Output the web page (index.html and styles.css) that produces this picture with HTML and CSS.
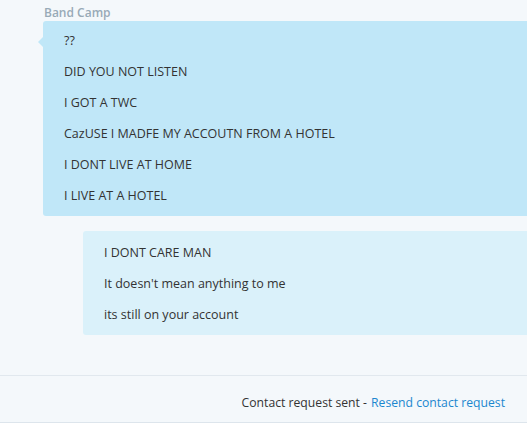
FILE: index.html
```html
<!DOCTYPE html>
<html>
<head>
<meta charset="utf-8">
<link rel="stylesheet" href="styles.css">
</head>
<body>
<div class="chat">
  <div class="sender">Band Camp</div>
  <div class="bubble incoming">
    <p>??</p>
    <p>DID YOU NOT LISTEN</p>
    <p>I GOT A TWC</p>
    <p>CazUSE I MADFE MY ACCOUTN FROM A HOTEL</p>
    <p>I DONT LIVE AT HOME</p>
    <p>I LIVE AT A HOTEL</p>
  </div>
  <div class="bubble outgoing">
    <p>I DONT CARE MAN</p>
    <p>It doesn't mean anything to me</p>
    <p>its still on your account</p>
  </div>
</div>
<div class="footer">
  <span>Contact request sent - </span><a class="link" href="#">Resend contact request</a>
</div>
</body>
</html>
```
FILE: styles.css
```css
html, body {
  margin: 0;
  padding: 0;
  background: #f4f8fb;
  font-family: "Open Sans", "Noto Sans", sans-serif;
  font-size: 12.5px;
  color: #333;
  height: 423px;
  overflow: hidden;
}
.chat {
  height: 376px;
  box-sizing: border-box;
  border-bottom: 1px solid #e1e8ee;
  display: flex;
  flex-direction: column;
  align-items: flex-start;
}
.sender {
  margin: 4px 0 0 44px;
  height: 17px;
  line-height: 17px;
  font-weight: 600;
  color: #98aab7;
  font-size: 12px;
}
.bubble {
  box-sizing: border-box;
  border-radius: 3px 0 0 3px;
}
.bubble p {
  margin: 0;
  line-height: 31px;
}
.incoming {
  position: relative;
  margin-left: 43px;
  width: 484px;
  background: #c0e7f8;
  padding: 4px 21px 5px 21px;
}
.incoming::before {
  content: "";
  position: absolute;
  left: -5px;
  top: 16px;
  border-style: solid;
  border-width: 5px 5px 5px 0;
  border-color: transparent #c0e7f8 transparent transparent;
}
.outgoing {
  margin: 15px 0 0 83px;
  width: 444px;
  background: #daf1fa;
  padding: 6px 21px 5px 21px;
}
.footer {
  height: 47px;
  box-sizing: border-box;
  border-bottom: 1px solid #dde5ec;
  display: flex;
  align-items: center;
  justify-content: flex-end;
  padding: 6px 22px 0 0;
  font-size: 12.2px;
}
.link {
  color: #1b87cf;
  text-decoration: none;
  margin-left: 4px;
}
```
